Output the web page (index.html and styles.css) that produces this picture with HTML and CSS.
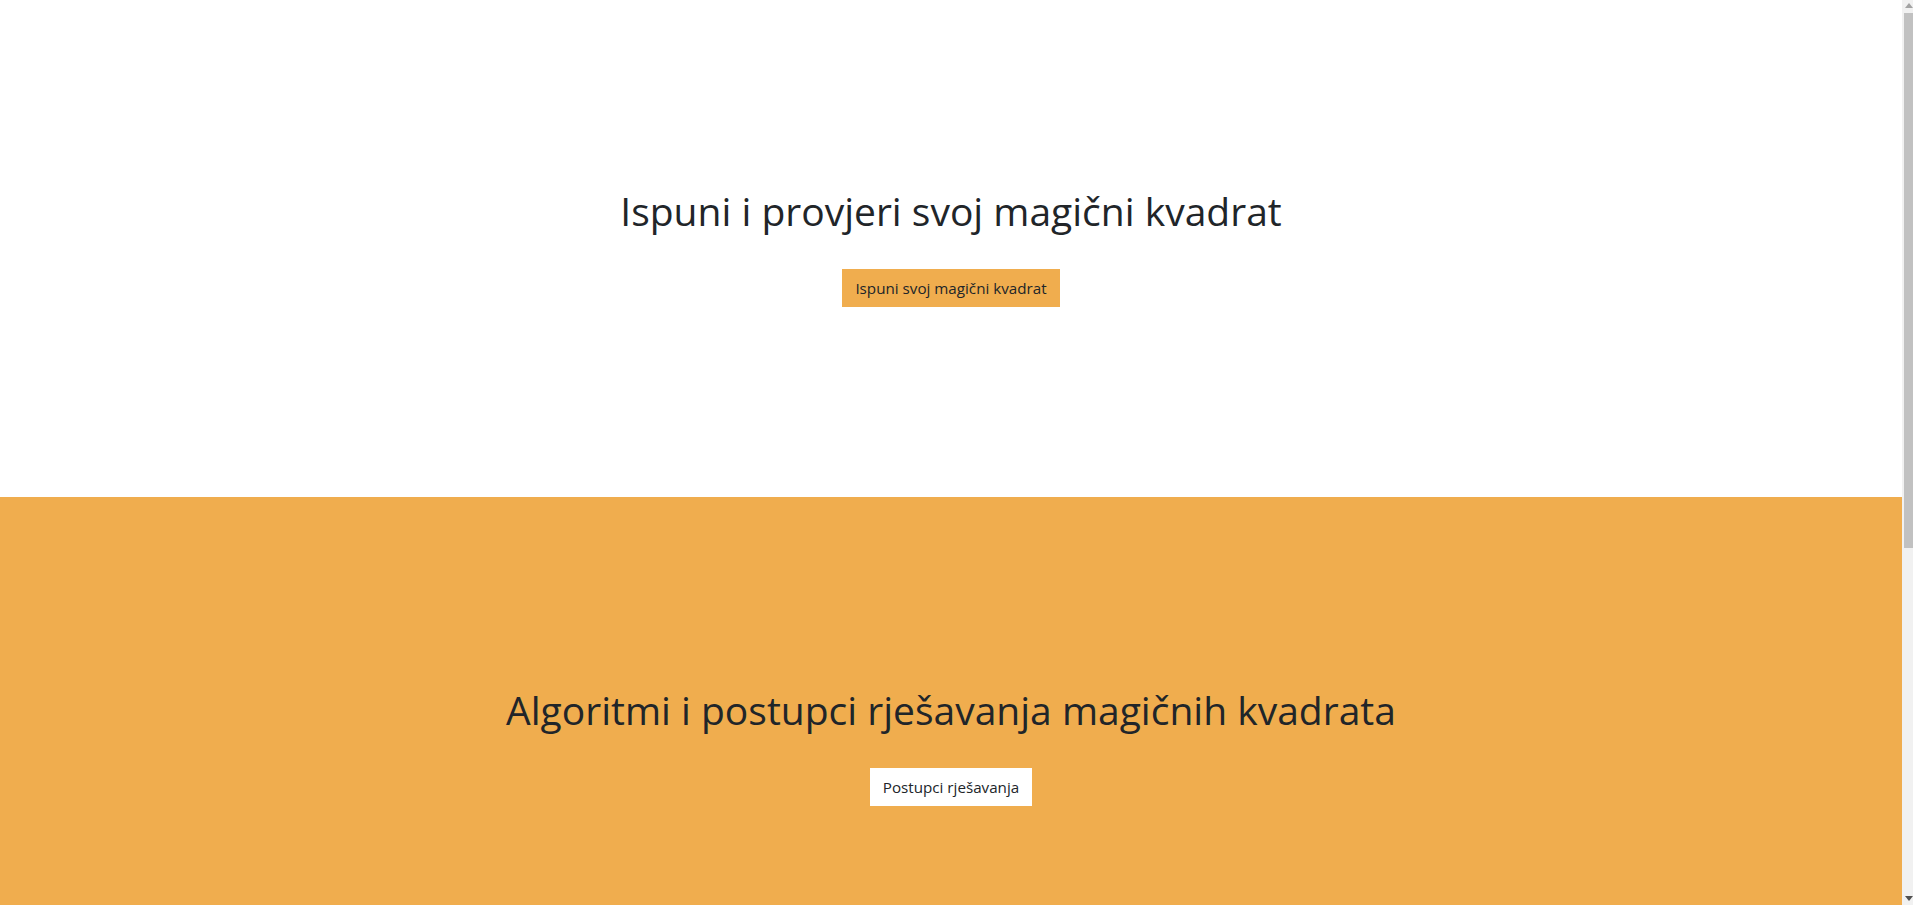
FILE: index.html
```html
<!DOCTYPE html>
<html lang="hr">
<head>
<meta charset="utf-8">
<title>Magični kvadrat</title>
<link rel="stylesheet" href="styles.css">
</head>
<body>
<main class="page">
  <section class="hero hero-light">
    <h1 class="hero-title">Ispuni i provjeri svoj magični kvadrat</h1>
    <a class="btn btn-warning" href="#">Ispuni svoj magični kvadrat</a>
  </section>
  <section class="hero hero-orange">
    <h1 class="hero-title">Algoritmi i postupci rješavanja magičnih kvadrata</h1>
    <a class="btn btn-light" href="#">Postupci rješavanja</a>
  </section>
</main>
<div class="scrollbar" aria-hidden="true">
  <div class="sb-btn sb-up">
    <svg width="8" height="5" viewBox="0 0 8 5"><polygon points="0,5 4,0 8,5" fill="#a3a3a3"/></svg>
  </div>
  <div class="sb-track"><div class="sb-thumb"></div></div>
  <div class="sb-btn sb-down">
    <svg width="8" height="5" viewBox="0 0 8 5"><polygon points="0,0 8,0 4,5" fill="#505050"/></svg>
  </div>
</div>
</body>
</html>
```
FILE: styles.css
```css
* { box-sizing: border-box; }
html, body { margin: 0; padding: 0; }
html::-webkit-scrollbar { display: none; }
html { scrollbar-width: none; }
body {
  font-family: "Open Sans", "Noto Sans", sans-serif;
  color: #212529;
  background: #fff;
}
.page { margin-right: 11px; }

.hero {
  display: flex;
  flex-direction: column;
  align-items: center;
  gap: 34px;
  padding: 188px 0 190px;
}
.hero-light { background: #fff; }
.hero-orange { background: #f0ad4e; padding: 190px 0 192px; }
.hero-title {
  margin: 0;
  font-size: 39px;
  font-weight: 400;
  line-height: 1.2;
  color: #212529;
}
.btn {
  display: inline-block;
  font-size: 15.2px;
  line-height: 24px;
  padding: 6px 12px;
  border: 1px solid transparent;
  border-radius: 0;
  color: #212529;
  text-decoration: none;
}
.btn-warning { background: #f0ad4e; border-color: #f0ad4e; }
.btn-light { background: #fff; border-color: #fff; }

/* window scrollbar overlay */
.scrollbar {
  position: fixed;
  top: 0;
  right: 0;
  bottom: 0;
  width: 11px;
  background: #f1f1f1;
  display: flex;
  flex-direction: column;
}
.sb-btn {
  height: 13px;
  display: flex;
  justify-content: center;
  flex: none;
}
.sb-up { align-items: flex-start; padding: 3px 0 0 2px; }
.sb-down { align-items: flex-end; padding: 0 0 4px 2px; }
.sb-btn svg { display: block; }
.sb-track { flex: 1; padding-left: 2px; }
.sb-thumb { height: 535px; background: #c1c1c1; }
```
